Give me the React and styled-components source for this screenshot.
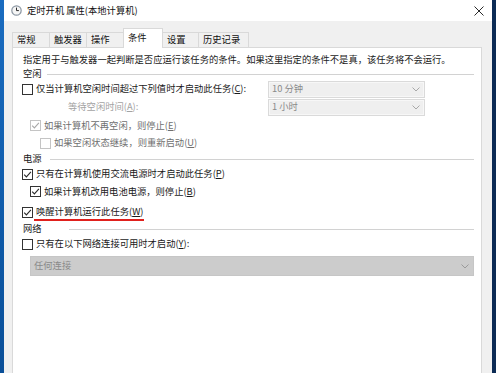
import React from "react";
import styled, { createGlobalStyle } from "styled-components";

const GlobalStyle = createGlobalStyle`
  html, body {
    margin: 0;
    padding: 0;
    height: 100%;
    overflow: hidden;
  }
  body {
    font-family: "Noto Sans CJK SC", "Noto Sans", sans-serif;
    font-size: 9.3px;
    color: #1a1a1a;
    background: #0c2b55;
  }
  #root {
    height: 100%;
  }
`;

const Page = styled.div`
  display: flex;
  height: 373px;
`;

const DesktopEdge = styled.div`
  width: 4px;
  flex: none;
  background: ${(p) =>
    p.$side === "left"
      ? "linear-gradient(180deg, #1a6cc0 0%, #0f5aa8 60%, #0a4f98 100%)"
      : "#0c2b55"};
`;

const Window = styled.div`
  flex: 1;
  min-width: 0;
  display: flex;
  flex-direction: column;
  background: #f0f0f0;
`;

const TitleBar = styled.div`
  height: 21px;
  flex: none;
  display: flex;
  align-items: center;
  background: #fff;
  padding-left: 7px;
`;

const Title = styled.span`
  margin-left: 5px;
  flex: 1;
  color: #111;
  line-height: 1;
`;

const CloseButton = styled.span`
  width: 10px;
  height: 10px;
  margin-right: 8px;
  display: flex;
`;

const Body = styled.div`
  flex: 1;
  display: flex;
  flex-direction: column;
  padding: 7px 10px 0 8px;
  min-height: 0;
`;

const TabStrip = styled.div`
  height: 20px;
  display: flex;
  align-items: flex-end;
  margin-bottom: -1px;
  position: relative;
  z-index: 1;
`;

const Tab = styled.div`
  box-sizing: border-box;
  width: ${(p) => p.$w}px;
  height: ${(p) => (p.$active ? 20 : 15)}px;
  margin-bottom: ${(p) => (p.$active ? 0 : 1)}px;
  margin-right: -1px;
  border: 1px solid #d9d9d9;
  border-bottom: none;
  background: ${(p) => (p.$active ? "#fff" : "#f0f0f0")};
  position: relative;
  z-index: ${(p) => (p.$active ? 2 : 1)};
  display: flex;
  align-items: center;
  padding: 0 0 ${(p) => (p.$active ? 2 : 0)}px 4px;
  line-height: 1;
  color: #111;
`;

const Panel = styled.div`
  flex: 1;
  background: #fff;
  border: 1px solid #d9d9d9;
  border-bottom: none;
  padding: 4px 7px 0 9px;
  display: flex;
  flex-direction: column;
`;

const Line = styled.div`
  height: ${(p) => p.$h}px;
  display: flex;
  align-items: center;
  padding-left: ${(p) => p.$indent || 0}px;
  line-height: 1;
  color: ${(p) => p.$color || "#1a1a1a"};
  white-space: nowrap;
`;

const GroupHeader = styled.div`
  height: ${(p) => p.$h}px;
  display: flex;
  align-items: center;
  padding-left: 1px;
  line-height: 1;
`;

const Rule = styled.span`
  flex: 1;
  height: 1px;
  margin-left: ${(p) => p.$gap}px;
  background: #d2d2d2;
`;

const IdleGrid = styled.div`
  display: grid;
  grid-template-columns: 246px 157px;
  grid-auto-rows: 18px;
  align-items: center;
`;

const Label = styled.span`
  margin-left: 3px;
  position: relative;
  color: ${(p) => (p.$disabled ? "#6f6f6f" : "inherit")};

  ${(p) =>
    p.$mark &&
    `
    &::after {
      content: "";
      position: absolute;
      left: -2px;
      right: -1px;
      bottom: -4px;
      height: 2px;
      background: #e0211d;
    }
  `}
`;

const AccessKey = styled.u`
  text-decoration: underline;
  text-underline-offset: 1px;
`;

const BoxFrame = styled.span`
  box-sizing: border-box;
  width: 11px;
  height: 11px;
  flex: none;
  border: 1px solid ${(p) => (p.$disabled ? "#c4c4c4" : "#333")};
  background: #fff;
  display: flex;
  align-items: center;
  justify-content: center;
`;

const Combo = styled.div`
  box-sizing: border-box;
  height: ${(p) => p.$h}px;
  display: flex;
  align-items: center;
  justify-content: space-between;
  padding: 0 4px 0 3px;
  line-height: 1;
  color: #8a8a8a;
  background: ${(p) => (p.$dark ? "#cccccc" : "#efefef")};
  border: 1px solid ${(p) => (p.$dark ? "#c6c6c6" : "#dadada")};
  box-shadow: ${(p) => (p.$dark ? "none" : "inset 0 0 0 1px #f7f7f7")};
  margin: ${(p) => p.$margin || "0"};
`;

function ClockIcon() {
  return (
    <svg width="11" height="11" viewBox="0 0 11 11">
      <circle cx="5.5" cy="5.5" r="4.7" fill="#f6f6f6" stroke="#8c97a3" strokeWidth="1.2" />
      <path d="M5.5 2.6 V5.6 H7.9" fill="none" stroke="#2b2b2b" strokeWidth="1" />
    </svg>
  );
}

function CloseIcon() {
  return (
    <svg width="10" height="10" viewBox="0 0 10 10">
      <path d="M0.5 0.5 L9.5 9.5 M9.5 0.5 L0.5 9.5" stroke="#2a2a2a" strokeWidth="1" />
    </svg>
  );
}

function Chevron({ color = "#a8a8a8" }) {
  return (
    <svg width="8" height="5" viewBox="0 0 8 5">
      <path d="M0.5 0.5 L4 4 L7.5 0.5" fill="none" stroke={color} strokeWidth="1" />
    </svg>
  );
}

function CheckBox({ checked, disabled }) {
  return (
    <BoxFrame $disabled={disabled}>
      {checked && (
        <svg width="9" height="9" viewBox="0 0 9 9">
          <path
            d="M1.2 4.6 L3.4 6.9 L7.9 1.8"
            fill="none"
            stroke={disabled ? "#a8a8a8" : "#2a2a2a"}
            strokeWidth="1.1"
          />
        </svg>
      )}
    </BoxFrame>
  );
}

const tabs = [
  { name: "常规", w: 38 },
  { name: "触发器", w: 38 },
  { name: "操作", w: 38 },
  { name: "条件", w: 40, active: true },
  { name: "设置", w: 37 },
  { name: "历史记录", w: 51 },
];

export default function App() {
  return (
    <>
      <GlobalStyle />
      <Page>
        <DesktopEdge $side="left" />
        <Window>
          <TitleBar>
            <ClockIcon />
            <Title>定时开机 属性(本地计算机)</Title>
            <CloseButton>
              <CloseIcon />
            </CloseButton>
          </TitleBar>
          <Body>
            <TabStrip>
              {tabs.map((t) => (
                <Tab key={t.name} $w={t.w} $active={t.active}>
                  {t.name}
                </Tab>
              ))}
            </TabStrip>
            <Panel>
              <Line $h={16} $indent={1}>
                指定用于与触发器一起判断是否应运行该任务的条件。如果这里指定的条件不是真，该任务将不会运行。
              </Line>

              <GroupHeader $h={12}>
                空闲
                <Rule $gap={5} />
              </GroupHeader>
              <IdleGrid>
                <Line $h={18}>
                  <CheckBox />
                  <Label>
                    仅当计算机空闲时间超过下列值时才启动此任务(<AccessKey>C</AccessKey>):
                  </Label>
                </Line>
                <Combo $h={17}>
                  10 分钟
                  <Chevron />
                </Combo>
                <Line $h={18} $indent={46} $color="#a3a3a3">
                  等待空闲时间(<AccessKey>A</AccessKey>):
                </Line>
                <Combo $h={17}>
                  1 小时
                  <Chevron />
                </Combo>
              </IdleGrid>
              <Line $h={19} $indent={8}>
                <CheckBox checked disabled />
                <Label $disabled>
                  如果计算机不再空闲，则停止(<AccessKey>E</AccessKey>)
                </Label>
              </Line>
              <Line $h={16} $indent={18}>
                <CheckBox disabled />
                <Label $disabled>
                  如果空闲状态继续，则重新启动(<AccessKey>U</AccessKey>)
                </Label>
              </Line>

              <GroupHeader $h={16}>
                电源
                <Rule $gap={8} />
              </GroupHeader>
              <Line $h={14}>
                <CheckBox checked />
                <Label>
                  只有在计算机使用交流电源时才启动此任务(<AccessKey>P</AccessKey>)
                </Label>
              </Line>
              <Line $h={21} $indent={8}>
                <CheckBox checked />
                <Label>
                  如果计算机改用电池电源，则停止(<AccessKey>B</AccessKey>)
                </Label>
              </Line>
              <Line $h={20}>
                <CheckBox checked />
                <Label $mark>
                  唤醒计算机运行此任务(<AccessKey>W</AccessKey>)
                </Label>
              </Line>

              <GroupHeader $h={14}>
                网络
                <Rule $gap={27} />
              </GroupHeader>
              <Line $h={16}>
                <CheckBox />
                <Label>
                  只有在以下网络连接可用时才启动(<AccessKey>Y</AccessKey>):
                </Label>
              </Line>
              <Combo $h={20} $dark $margin="4px 0 0 8px">
                任何连接
                <Chevron color="#9a9a9a" />
              </Combo>
            </Panel>
          </Body>
        </Window>
        <DesktopEdge $side="right" />
      </Page>
    </>
  );
}
